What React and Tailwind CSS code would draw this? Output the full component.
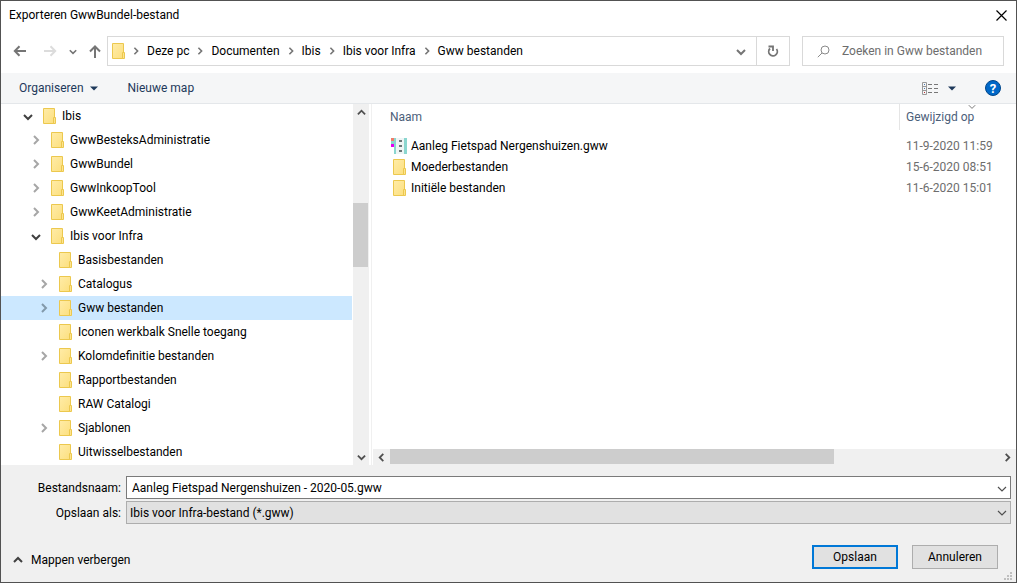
import React, { useState } from "react";

const treeItems = [
  { name: "Ibis", level: 0, state: "open" },
  { name: "GwwBesteksAdministratie", level: 1, state: "closed" },
  { name: "GwwBundel", level: 1, state: "closed" },
  { name: "GwwInkoopTool", level: 1, state: "closed" },
  { name: "GwwKeetAdministratie", level: 1, state: "closed" },
  { name: "Ibis voor Infra", level: 1, state: "open" },
  { name: "Basisbestanden", level: 2 },
  { name: "Catalogus", level: 2, state: "closed" },
  { name: "Gww bestanden", level: 2, state: "closed" },
  { name: "Iconen werkbalk Snelle toegang", level: 2 },
  { name: "Kolomdefinitie bestanden", level: 2, state: "closed" },
  { name: "Rapportbestanden", level: 2 },
  { name: "RAW Catalogi", level: 2 },
  { name: "Sjablonen", level: 2, state: "closed" },
  { name: "Uitwisselbestanden", level: 2 },
];

const indent = ["pl-5", "pl-7", "pl-9"];

const files = [
  { name: "Aanleg Fietspad Nergenshuizen.gww", date: "11-9-2020 11:59", type: "gww" },
  { name: "Moederbestanden", date: "15-6-2020 08:51", type: "folder" },
  { name: "Initiële bestanden", date: "11-6-2020 15:01", type: "folder" },
];

const crumbs = ["Deze pc", "Documenten", "Ibis", "Ibis voor Infra", "Gww bestanden"];

function FolderIcon() {
  return (
    <svg width="13" height="16" viewBox="0 0 13 16" className="shrink-0">
      <defs>
        <linearGradient id="folder" x1="0" y1="0" x2="1" y2="1">
          <stop offset="0" stopColor="#ffeca8" />
          <stop offset="1" stopColor="#fcdf7e" />
        </linearGradient>
      </defs>
      <path d="M.5.5h11v15H.5z" fill="url(#folder)" stroke="#ecc84e" />
      <path d="M10.5 9.5h2v6h-2z" fill="#fde48f" stroke="#ecc84e" />
    </svg>
  );
}

function GwwIcon() {
  return (
    <svg width="16" height="16" viewBox="0 0 16 16" className="shrink-0">
      <path d="M0 0h3v3H0z" fill="#ef7d6a" />
      <path d="M0 3h3v3H0zM3 0h2v16H3z" fill="#8ad6cf" />
      <path d="M0 6h3v3H0z" fill="#e400f0" />
      <path d="M5 0h8v16H5z" fill="#eef5f5" />
      <path d="M13 0h3v16h-3z" fill="#8ad6cf" />
      <path d="M8 2h3v2H8zM8 7h3v2H8zM8 12h3v2H8z" fill="#6b7777" />
    </svg>
  );
}

const chevrons = {
  down: "M1 4l4 4 4-4",
  up: "M1 7l4-4 4 4",
  right: "M3 1l4 4-4 4",
  left: "M7 1L3 5l4 4",
};

function Chevron({ dir, className = "", size = 10, stroke = 2 }) {
  return (
    <svg width={size} height={size} viewBox="0 0 10 10" className={`shrink-0 ${className}`}>
      <path d={chevrons[dir]} fill="none" stroke="currentColor" strokeWidth={stroke} />
    </svg>
  );
}

function TitleBar() {
  return (
    <div className="flex h-[35px] items-start justify-between pr-[5px] pl-2">
      <h1 className="mt-1.5 leading-4">Exporteren GwwBundel-bestand</h1>
      <button aria-label="Sluiten" className="p-1 pt-[9px]">
        <svg width="11" height="11" viewBox="0 0 11 11">
          <path d="M.5.5l10 10M10.5.5l-10 10" stroke="#000" strokeWidth="1.2" />
        </svg>
      </button>
    </div>
  );
}

function NavBar() {
  return (
    <div className="flex items-center pr-3 pb-[7px]">
      <div className="flex w-[106px] shrink-0 items-center pl-3 text-[#757575]">
        <button aria-label="Terug">
          <svg width="14" height="12" viewBox="0 0 14 12" fill="none" stroke="currentColor" strokeWidth="2">
            <path d="M13 6H2M6.500 1.200L1.800 6l4.700 4.800" />
          </svg>
        </button>
        <button aria-label="Vooruit" className="ml-4 text-[#dcdcdc]">
          <svg width="14" height="12" viewBox="0 0 14 12" fill="none" stroke="currentColor" strokeWidth="2">
            <path d="M1 6h11M7.500 1.200L12.200 6l-4.700 4.800" />
          </svg>
        </button>
        <button aria-label="Recente locaties" className="ml-3">
          <Chevron dir="down" size={8} />
        </button>
        <button aria-label="Omhoog" className="ml-3">
          <svg width="12" height="13" viewBox="0 0 12 13" fill="none" stroke="currentColor" strokeWidth="2">
            <path d="M6 13V2M1 6.500l5-5 5 5" />
          </svg>
        </button>
      </div>
      <div className="flex h-[30px] flex-1 border border-[#d9d9d9]">
        <nav className="flex flex-1 items-center pl-1">
          <FolderIcon />
          {crumbs.map((crumb) => (
            <React.Fragment key={crumb}>
              <Chevron dir="right" size={8} stroke={2} className="mx-[7px] text-[#757575]" />
              <a href="#" className="whitespace-nowrap">{crumb}</a>
            </React.Fragment>
          ))}
        </nav>
        <button aria-label="Vorige locaties" className="w-[31px] pl-[11px] text-[#757575]">
          <Chevron dir="down" />
        </button>
        <button aria-label="Vernieuwen" className="flex w-[33px] items-center justify-center border-l border-[#d9d9d9] text-[#757575]">
          <svg width="12" height="12" viewBox="0 0 12 12" fill="none" stroke="currentColor" strokeWidth="1.800">
            <path d="M9.500 4A4.300 4.300 0 1 1 3 3.500" />
            <path d="M1.500 1.500h4.500v4.500" />
          </svg>
        </button>
      </div>
      <label className="ml-3 flex h-[30px] w-[202px] items-center border border-[#d9d9d9] pl-3.5">
        <svg width="13" height="13" viewBox="0 0 13 13" fill="none" stroke="#8a8a8a" className="shrink-0">
          <circle cx="8" cy="5" r="4" />
          <path d="M5 8L.8 12.200" />
        </svg>
        <input
          type="text"
          aria-label="Zoeken in Gww bestanden"
          placeholder="Zoeken in Gww bestanden"
          className="ml-3 w-full min-w-0 outline-none placeholder:text-[#6d6d6d]"
        />
      </label>
    </div>
  );
}

function Toolbar() {
  return (
    <div className="flex h-[31px] items-center border-b border-[#e4e7ea] bg-[#f5f6f7] pr-[15px] pl-[18px] text-[#1e395b]">
      <button className="flex items-center gap-1.5">
        Organiseren
        <svg width="8" height="5" viewBox="0 0 8 5"><path d="M0 .5h8L4 4.500z" fill="currentColor" /></svg>
      </button>
      <button className="ml-[30px]">Nieuwe map</button>
      <button aria-label="Weergave wijzigen" className="ml-auto flex items-center gap-2.5">
        <svg width="16" height="13" viewBox="0 0 16 13" fill="none">
          <path d="M.5.5h4v12h-4zM.5 4.500h4M.5 8.500h4" stroke="#999" />
          <path d="M2 2h1v1H2zM2 6h1v1H2z" fill="#4a7ab0" />
          <path d="M2 10h1v1H2z" fill="#c03030" />
          <path d="M6 2.500h4M12 2.500h4M6 6.500h4M12 6.500h4M6 10.500h4M12 10.500h4" stroke="#777" />
        </svg>
        <svg width="8" height="5" viewBox="0 0 8 5"><path d="M0 .5h8L4 4.500z" fill="currentColor" /></svg>
      </button>
      <button aria-label="Help" className="ml-[29px] flex h-4 w-4 items-center justify-center rounded-full border border-[#00478c] bg-[#0068c8] text-[13px] leading-none font-bold text-white">
        ?
      </button>
    </div>
  );
}

function FolderTree() {
  const [selected, setSelected] = useState("Gww bestanden");

  return (
    <div className="flex w-[371px] shrink-0 border-r border-[#f0f0f0]">
      <ul className="mr-px flex-1">
        {treeItems.map((item) => (
          <li key={item.name}>
            <button
              onClick={() => setSelected(item.name)}
              className={`flex h-6 w-full items-center ${indent[item.level]} ${selected === item.name ? "bg-[#cce8ff]" : ""}`}
            >
              <span className="mr-[9px] flex w-[13px] justify-center">
                {item.state === "open" && <Chevron dir="down" className="text-[#404040]" />}
                {item.state === "closed" && (
                  <Chevron dir="right" className={selected === item.name ? "text-[#8299aa]" : "text-[#a6a6a6]"} />
                )}
              </span>
              <FolderIcon />
              <span className="ml-1.5">{item.name}</span>
            </button>
          </li>
        ))}
      </ul>
      {/* vertical scrollbar */}
      <div className="mr-0.5 flex w-4 flex-col items-center bg-[#f0f0f0] text-[#505050]">
        <Chevron dir="up" size={9} className="mt-1" />
        <div className="mt-[86px] h-16 w-[15px] self-start bg-[#cdcdcd]" />
        <Chevron dir="down" size={9} className="mt-auto mb-1" />
      </div>
    </div>
  );
}

function FileList() {
  return (
    <div className="ml-px flex min-w-0 flex-1 flex-col">
      <table className="w-full table-fixed text-left">
        <thead>
          <tr className="h-[31px] align-top text-[#4c607a]">
            <th className="pl-[17px] font-normal">
              <div className="flex h-[26px] items-center">Naam</div>
            </th>
            <th className="w-[117px] font-normal">
              <div className="relative flex h-[26px] items-center border-l border-[#e5e5e5] pl-1.5">
                Gewijzigd op
                <Chevron dir="down" size={8} stroke={1.200} className="absolute top-[-2px] left-[68px] text-[#757575]" />
              </div>
            </th>
          </tr>
        </thead>
        <tbody>
          {files.map((file) => (
            <tr key={file.name} className="h-[21px]">
              <td className="pl-[18px]">
                <div className="flex items-center">
                  <span className="mr-1 flex w-4 justify-center">
                    {file.type === "gww" ? <GwwIcon /> : <FolderIcon />}
                  </span>
                  {file.name}
                </div>
              </td>
              <td className="pl-[7px] text-[#6d6d6d]">{file.date}</td>
            </tr>
          ))}
        </tbody>
      </table>
      {/* horizontal scrollbar */}
      <div className="mt-auto flex h-4 items-center bg-[#f0f0f0] text-[#505050]">
        <Chevron dir="left" size={9} className="mr-1 ml-1" />
        <div className="h-[15px] w-[69%] self-start bg-[#cdcdcd]" />
        <Chevron dir="right" size={9} className="mr-1 ml-auto" />
      </div>
    </div>
  );
}

function Footer() {
  const [fileName, setFileName] = useState("Aanleg Fietspad Nergenshuizen - 2020-05.gww");

  return (
    <form className="relative flex flex-1 flex-col bg-[#f0f0f0] pt-[11px]" onSubmit={(e) => e.preventDefault()}>
      <div className="grid grid-cols-[120px_1fr] items-center gap-x-[5px] gap-y-0.5 pr-[5px]">
        <label htmlFor="filename" className="text-right">Bestandsnaam:</label>
        <div className="flex h-[23px] border border-[#7a7a7a] bg-white">
          <input
            id="filename"
            type="text"
            value={fileName}
            onChange={(e) => setFileName(e.target.value)}
            className="min-w-0 flex-1 pl-[5px] outline-none"
          />
          <button type="button" aria-label="Eerdere namen" className="pr-[3px] text-[#505050]">
            <Chevron dir="down" stroke={1.200} />
          </button>
        </div>
        <label htmlFor="filetype" className="text-right">Opslaan als:</label>
        <div className="relative">
          <select id="filetype" className="block h-[23px] w-full appearance-none border border-[#adadad] bg-[#e1e1e1] pl-[3px] outline-none">
            <option>Ibis voor Infra-bestand (*.gww)</option>
          </select>
          <Chevron dir="down" stroke={1.200} className="pointer-events-none absolute top-1.5 right-1 text-[#505050]" />
        </div>
      </div>
      <div className="mt-[21px] flex items-start justify-between pr-[18px] pl-3">
        <button type="button" className="mt-[7px] flex items-center gap-2">
          <Chevron dir="up" className="text-[#404040]" />
          Mappen verbergen
        </button>
        <div className="flex gap-3.5">
          <button type="submit" className="h-6 w-[86px] border-2 border-[#0078d7] bg-[#e1e1e1]">Opslaan</button>
          <button type="button" className="h-6 w-[86px] border border-[#adadad] bg-[#e1e1e1]">Annuleren</button>
        </div>
      </div>
      {/* resize grip */}
      <svg width="8" height="8" viewBox="0 0 8 8" className="absolute right-1 bottom-0.5">
        <path d="M6 0h2v2H6zM3 3h2v2H3zM6 3h2v2H6zM0 6h2v2H0zM3 6h2v2H3zM6 6h2v2H6z" fill="#bfbfbf" />
      </svg>
    </form>
  );
}

export default function App() {
  return (
    <div className="flex min-h-screen flex-col border border-[#525252] bg-white font-['Roboto','Noto_Sans',sans-serif] text-[12px] leading-4 text-black">
      <TitleBar />
      <NavBar />
      <Toolbar />
      <main className="flex min-h-[361px]">
        <FolderTree />
        <FileList />
      </main>
      <Footer />
    </div>
  );
}
